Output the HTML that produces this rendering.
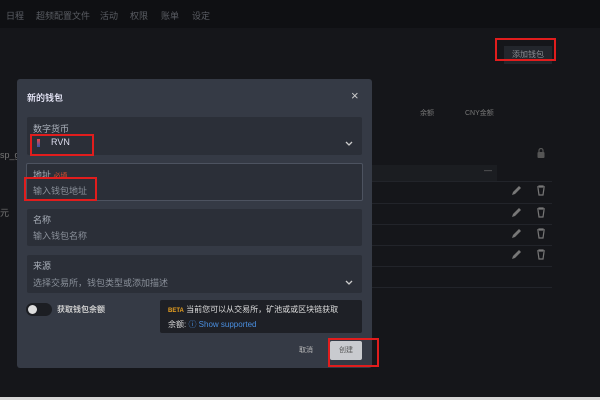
<!DOCTYPE html>
<html><head><meta charset="utf-8"><style>
*{margin:0;padding:0;box-sizing:border-box}
body{width:600px;height:400px;background:#15161a;font-family:"Liberation Sans","Noto Sans CJK SC",sans-serif;position:relative;overflow:hidden;color:#ccc}
.a{position:absolute;white-space:nowrap}
.nav{position:absolute;left:0;top:0;width:600px;height:28px;background:#0f1013}
.nav span{position:absolute;top:9px;font-size:9px;color:#5a5d63}
.fld{position:absolute;left:27px;width:335px;background:#2b2f38;border-radius:2px}
.lbl{font-size:9px;color:#aab0ba;position:absolute;left:6px}
.ph{font-size:9px;color:#8a909a;position:absolute;left:6px}
.red{position:absolute;border:2px solid #e11d1d}
.line{position:absolute;left:372px;width:180px;height:1px;background:#22242a}
</style></head><body>
<div class="nav">
<span style="left:6px">日程</span><span style="left:36px">超频配置文件</span><span style="left:100px">活动</span><span style="left:130px">权限</span><span style="left:161px">账单</span><span style="left:192px">设定</span>
</div>
<div class="a" style="left:504px;top:46px;width:48px;height:18px;background:#23262c;font-size:8px;color:#8a8d93;text-align:center;line-height:18px">添加钱包</div>
<div class="red" style="left:495px;top:38px;width:61px;height:23px"></div>
<div class="a" style="left:420px;top:108px;font-size:7px;color:#777">余额</div>
<div class="a" style="left:465px;top:108px;font-size:7px;color:#777">CNY金额</div>
<div class="a" style="left:0;top:150px;font-size:9px;color:#777">sp_g</div>
<div class="a" style="left:0;top:206px;font-size:9px;color:#777">元</div>
<div class="a" style="left:372px;top:165px;width:125px;height:16px;background:#1b1d21"></div>
<div class="a" style="left:484px;top:166px;font-size:8px;color:#777">—</div>
<div class="line" style="top:181px"></div><div class="line" style="top:203px"></div><div class="line" style="top:224px"></div><div class="line" style="top:245px"></div><div class="line" style="top:266px"></div><div class="line" style="top:287px"></div>
<svg class="a" style="left:537px;top:148px" width="8" height="10" fill="#555"><rect x="0.5" y="4" width="7" height="6" rx="1"/><path d="M2 4V2.5a2 2 0 0 1 4 0V4" fill="none" stroke="#555" stroke-width="1.2"/></svg>
<svg class="a" style="left:511px;top:185px" width="12" height="80" fill="#777">
<g><path d="M1 10l1-3 6-6 2 2-6 6z"/></g>
<g transform="translate(0,22)"><path d="M1 10l1-3 6-6 2 2-6 6z"/></g>
<g transform="translate(0,43)"><path d="M1 10l1-3 6-6 2 2-6 6z"/></g>
<g transform="translate(0,64)"><path d="M1 10l1-3 6-6 2 2-6 6z"/></g>
</svg>
<svg class="a" style="left:536px;top:185px" width="10" height="90" fill="none" stroke="#777" stroke-width="1.2">
<g><path d="M1 2h8M3 2V1h4v1M2 3l1 7h4l1-7"/></g>
<g transform="translate(0,22)"><path d="M1 2h8M3 2V1h4v1M2 3l1 7h4l1-7"/></g>
<g transform="translate(0,43)"><path d="M1 2h8M3 2V1h4v1M2 3l1 7h4l1-7"/></g>
<g transform="translate(0,64)"><path d="M1 2h8M3 2V1h4v1M2 3l1 7h4l1-7"/></g>
</svg>
<div class="a" style="left:17px;top:79px;width:355px;height:289px;background:#353a45;border-radius:3px"></div>
<div class="a" style="left:27px;top:91px;font-size:9px;font-weight:bold;color:#dde">新的钱包</div>
<div class="a" style="left:351px;top:88px;font-size:13px;color:#ccc">×</div>
<div class="fld" style="top:117px;height:38px"><span class="lbl" style="top:5px">数字货币</span><span class="a" style="left:10px;top:22px;width:3px;height:8px;background:linear-gradient(#e44,#35a)"></span><span class="a" style="left:24px;top:20px;font-size:9px;color:#dde">RVN</span><svg class="a" style="left:318px;top:24px" width="8" height="5"><path d="M1 1l3 3 3-3" fill="none" stroke="#ccc" stroke-width="1.3"/></svg></div>
<div class="fld" style="left:26px;top:163px;width:337px;height:38px;border:1px solid #4d5360"><span class="lbl" style="top:4px">地址 <span style="color:#e0502f;font-size:7px">必填</span></span><span class="ph" style="top:20px">输入钱包地址</span></div>
<div class="fld" style="top:209px;height:37px"><span class="lbl" style="top:4px">名称</span><span class="ph" style="top:20px">输入钱包名称</span></div>
<div class="fld" style="top:255px;height:38px"><span class="lbl" style="top:4px">来源</span><span class="ph" style="top:21px">选择交易所，钱包类型或添加描述</span><svg class="a" style="left:318px;top:25px" width="8" height="5"><path d="M1 1l3 3 3-3" fill="none" stroke="#ccc" stroke-width="1.3"/></svg></div>
<div class="a" style="left:26px;top:303px;width:26px;height:13px;background:#1c1e23;border-radius:7px"></div>
<div class="a" style="left:28px;top:305px;width:9px;height:9px;background:#ddd;border-radius:50%"></div>
<div class="a" style="left:57px;top:304px;font-size:8px;font-weight:bold;color:#ccc">获取钱包余额</div>
<div class="a" style="left:160px;top:300px;width:202px;height:33px;background:#1e2026;border-radius:2px"></div>
<div class="a" style="left:168px;top:304px;font-size:8px;color:#ddd"><span style="color:#e8a020;font-size:6px;font-weight:bold">BETA</span> 当前您可以从交易所，矿池或或区块链获取</div>
<div class="a" style="left:168px;top:319px;font-size:8px;color:#ddd">余额: <span style="color:#4a8fe0">ⓘ Show supported</span></div>
<div class="a" style="left:299px;top:345px;font-size:7px;color:#bbb">取消</div>
<div class="a" style="left:330px;top:341px;width:32px;height:19px;background:#c9cbcf;border-radius:2px;font-size:7px;color:#555;text-align:center;line-height:19px">创建</div>
<div class="red" style="left:328px;top:338px;width:51px;height:29px"></div>
<div class="red" style="left:30px;top:134px;width:64px;height:22px"></div>
<div class="red" style="left:24px;top:177px;width:73px;height:24px"></div>
<div class="a" style="left:0;top:397px;width:600px;height:3px;background:#d8d8d8"></div>
</body></html>
